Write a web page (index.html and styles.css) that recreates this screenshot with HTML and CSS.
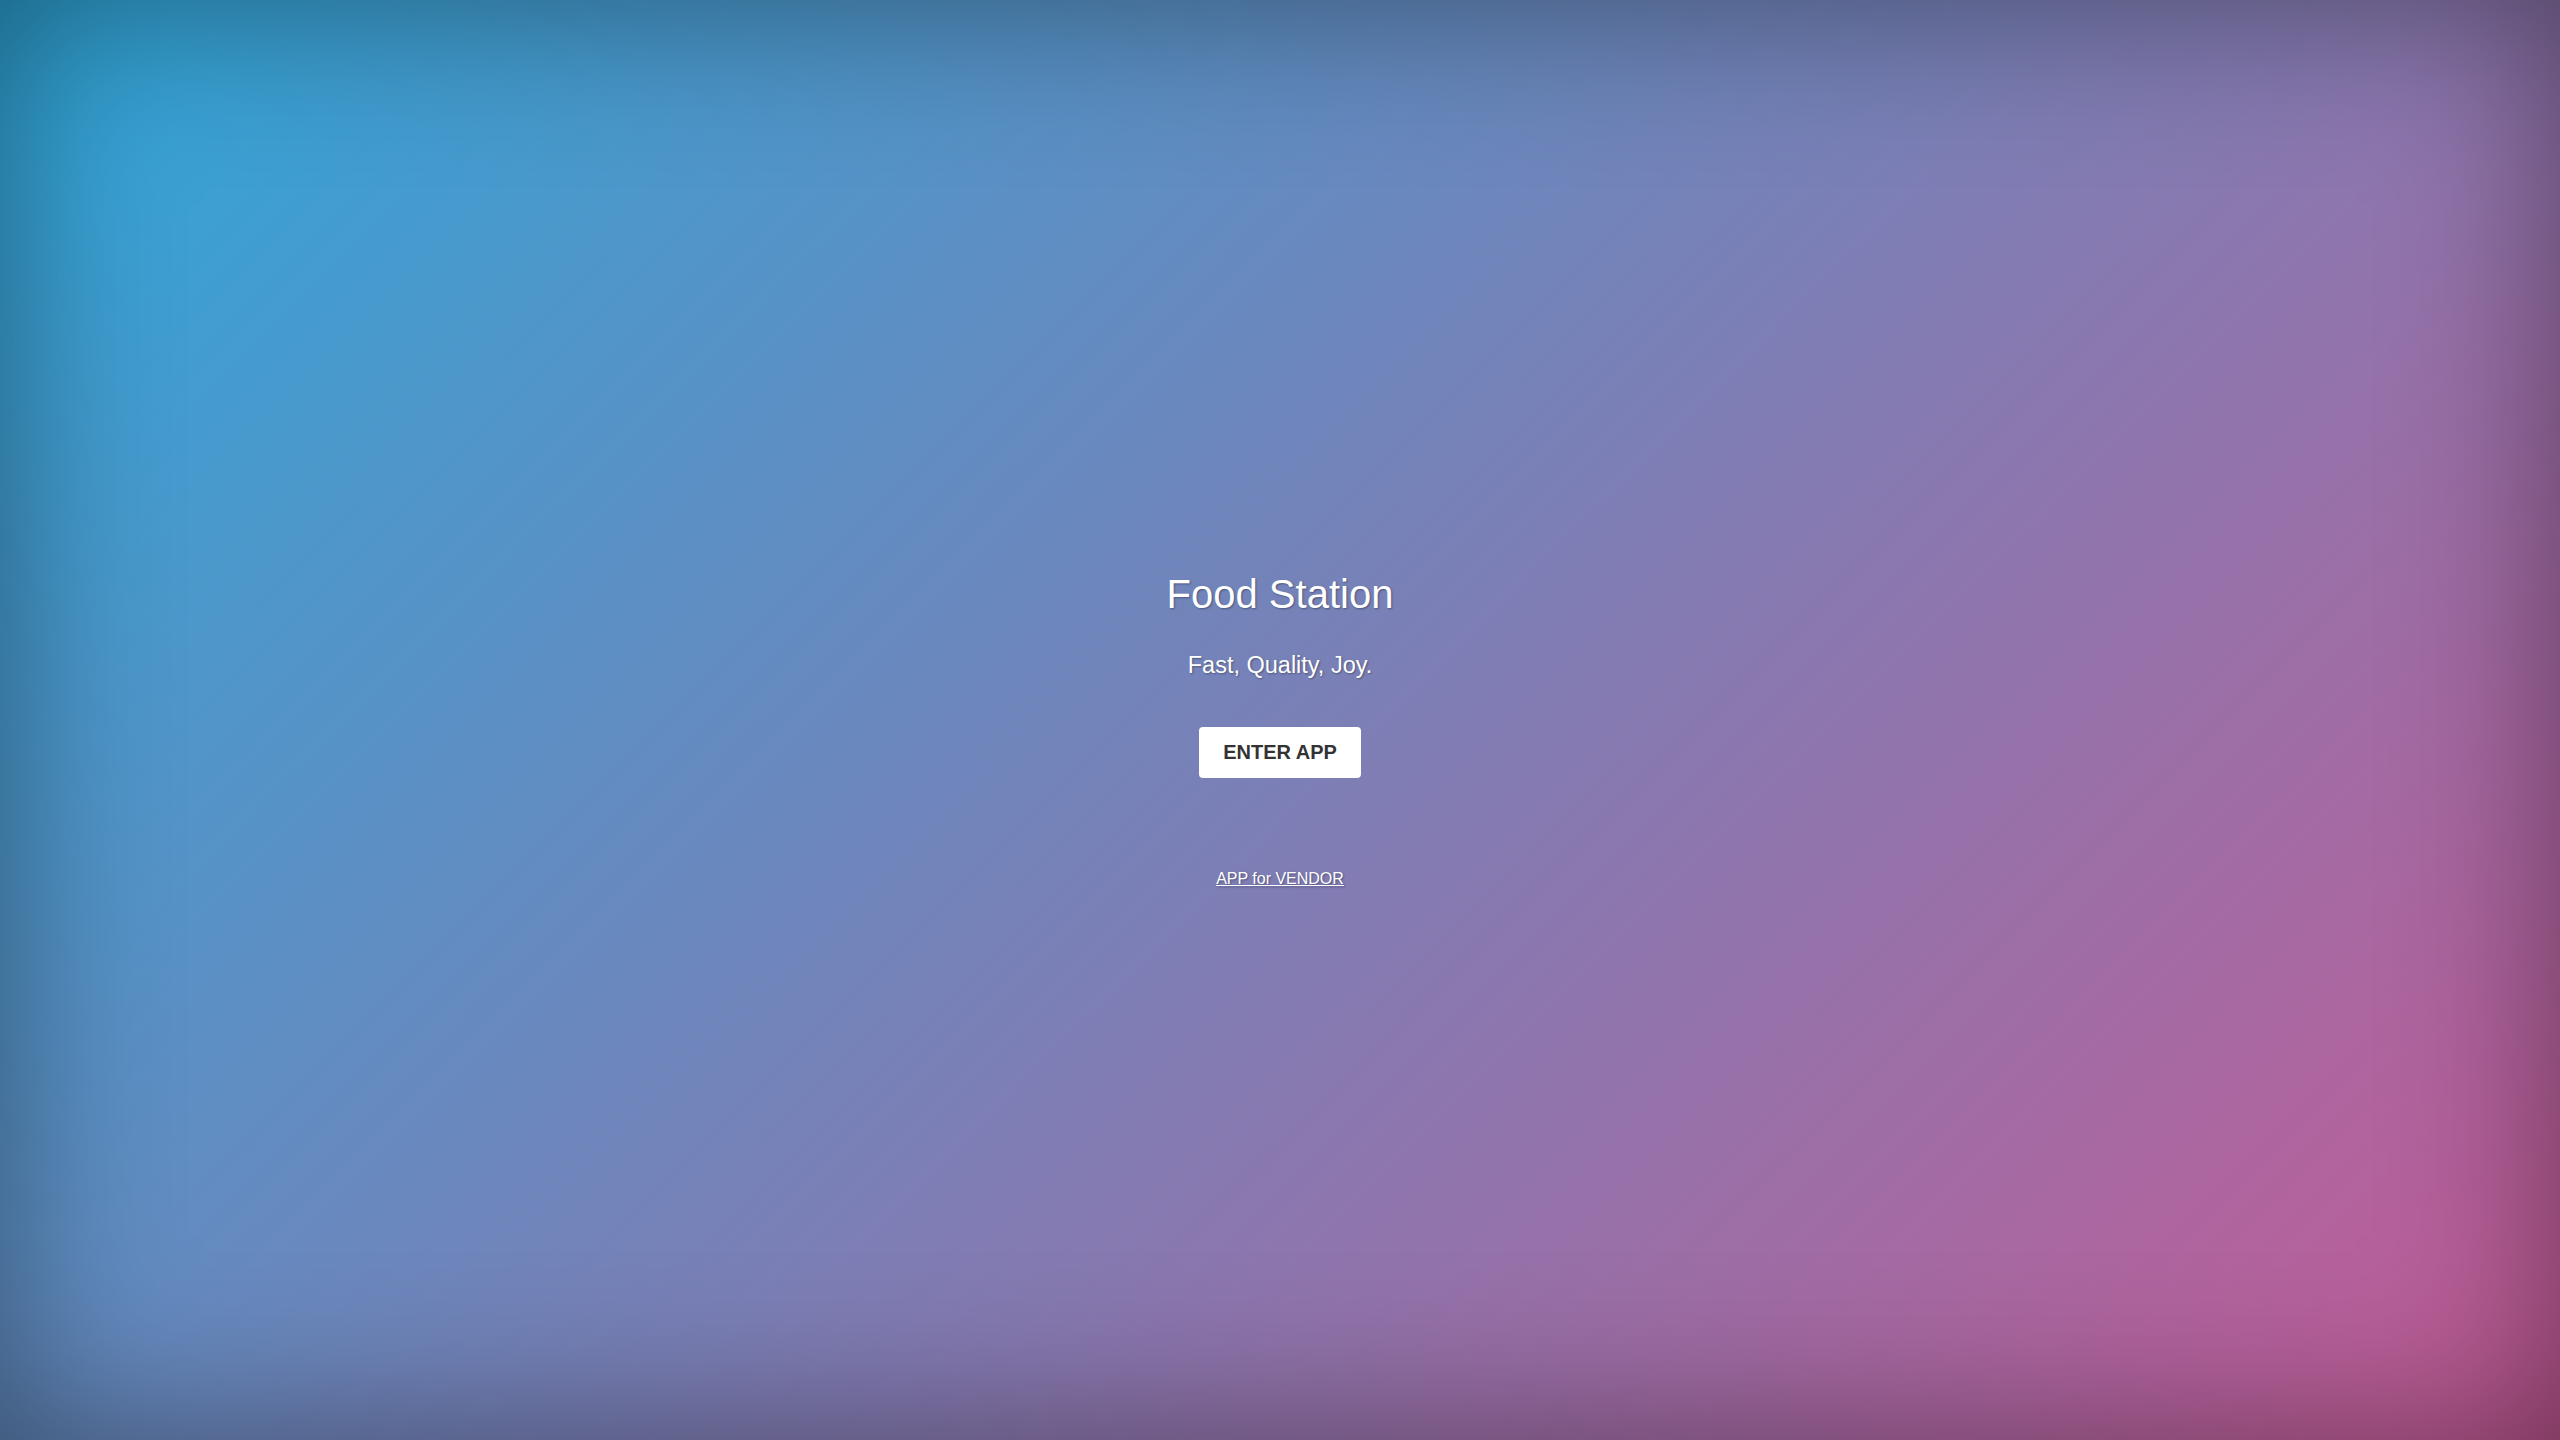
FILE: index.html
```html
<!DOCTYPE html>
<html lang="en">
<head>
<meta charset="utf-8">
<title>Food Station</title>
<link rel="stylesheet" href="styles.css">
</head>
<body>
<main class="landing">
  <h1 class="title">Food Station</h1>
  <p class="tagline">Fast, Quality, Joy.</p>
  <a class="enter-btn" href="#">ENTER APP</a>
  <a class="vendor-link" href="#">APP for VENDOR</a>
</main>
</body>
</html>
```
FILE: styles.css
```css
html, body {
  margin: 0;
  padding: 0;
  height: 100%;
}

body {
  font-family: "Liberation Sans", Arial, sans-serif;
  background: linear-gradient(135deg, #2ea7d9 0%, #c45a95 100%);
  color: #fff;
}

.landing {
  box-sizing: border-box;
  min-height: 100vh;
  display: flex;
  flex-direction: column;
  align-items: center;
  justify-content: center;
  padding-top: 18px;
  box-shadow: inset 0 0 170px rgba(0, 0, 0, 0.45);
}

.title {
  margin: 0 0 35px;
  font-size: 40px;
  font-weight: normal;
  line-height: 46px;
  text-shadow: 1px 1px 2px rgba(0, 0, 0, 0.35);
}

.tagline {
  margin: 0 0 48px;
  font-size: 23.5px;
  line-height: 27px;
  text-shadow: 1px 1px 2px rgba(0, 0, 0, 0.35);
}

.enter-btn {
  display: block;
  background: #fff;
  color: #333;
  font-weight: bold;
  font-size: 20px;
  line-height: 23px;
  padding: 14px 24px;
  border-radius: 4px;
  text-decoration: none;
  margin-bottom: 92px;
}

.vendor-link {
  color: #fff;
  font-size: 16px;
  line-height: 18px;
  text-decoration: underline;
  text-shadow: 1px 1px 2px rgba(0, 0, 0, 0.35);
}
```
